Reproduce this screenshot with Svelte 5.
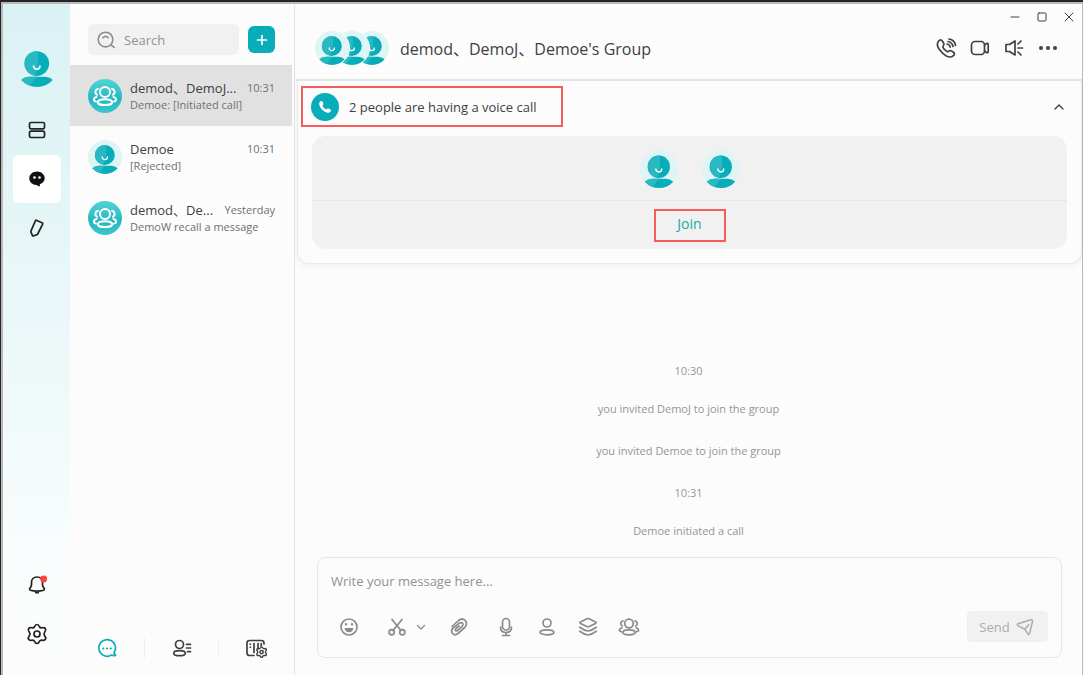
<script lang="ts">
	type Chat = { name: string; time: string; preview: string; group: boolean };

	const chats: Chat[] = [
		{ name: 'demod、DemoJ...', time: '10:31', preview: 'Demoe: [Initiated call]', group: true },
		{ name: 'Demoe', time: '10:31', preview: '[Rejected]', group: false },
		{ name: 'demod、De...', time: 'Yesterday', preview: 'DemoW recall a message', group: true }
	];
	const feed = [
		{ time: '10:30', lines: ['you invited DemoJ to join the group', 'you invited Demoe to join the group'] },
		{ time: '10:31', lines: ['Demoe initiated a call'] }
	];

	let selected = $state(0);
	let open = $state(true);
	let search = $state('');
	let message = $state('');
</script>

{#snippet person()}
	<svg class="person" viewBox="0 0 34 34" aria-hidden="true">
		<circle cx="17" cy="17" r="17" fill="#dff4f5" />
		<circle cx="16.800" cy="15" r="10" fill="#07adb8" />
		<path d="M16.800 5A10 10 0 0 0 15 24.800Q19.500 16 17.500 5Z" fill="#2ab9c3" />
		<path d="M4.300 28.300Q7 25.800 11 25.800H23Q27 25.800 29.700 28.300Q24.500 34 17 34T4.300 28.300Z" fill="#07adb8" />
		<path d="M4.300 28.300Q7 25.800 11 25.800H17L11.500 33Q7.500 31.500 4.300 28.300Z" fill="#2ab9c3" />
		<path d="M14.200 17a2.600 2.600 0 0 0 5.200 0" fill="none" stroke="#fff" stroke-width="1.300" />
	</svg>
{/snippet}

{#snippet people()}
	<circle cx="12" cy="8.500" r="4.300" />
	<ellipse cx="12" cy="17.300" rx="6.200" ry="2.500" />
	<path d="M6 5.800a2.800 2.800 0 0 0-.8 5.200M4.800 12.800c-2.700.5-3.300 3.300-.5 4M18 5.800a2.800 2.800 0 0 1 .8 5.200M19.200 12.800c2.700.5 3.300 3.300.5 4" />
{/snippet}

{#snippet gear()}
	<path d="M9.700 4.500Q10.300 2.500 12 2.500T14.300 4.500Q15.300 6.300 17.300 5.800Q19.500 5.200 20.400 6.700T19.800 9.800Q18.300 12 19.800 14.200Q21.300 15.800 20.400 17.300T17.300 18.200Q15.300 17.700 14.300 19.500Q13.700 21.500 12 21.500T9.700 19.500Q8.700 17.700 6.700 18.200Q4.500 18.800 3.600 17.300T4.200 14.200Q5.700 12 4.200 9.800Q2.700 8.200 3.600 6.700T6.700 5.800Q8.700 6.300 9.700 4.500Z" />
	<circle cx="12" cy="12" r="3" />
{/snippet}

<div class="window">
	<nav class="rail">
		<button class="me" aria-label="Profile">{@render person()}</button>
		<button aria-label="Workspace">
			<svg viewBox="0 0 24 24"><rect x="4.500" y="4.500" width="15" height="6.300" rx="1.500" /><rect x="4.500" y="13.200" width="15" height="6.300" rx="1.500" /></svg>
		</button>
		<button class="current" aria-label="Messages">
			<svg viewBox="0 0 24 24">
				<path d="M12 4.500c-4.300 0-7.700 2.900-7.700 6.700s3 6.700 7.200 6.700q1.700 1.300 3.300 1.600v-2.200c2.800-1 4.900-3.400 4.900-6.100 0-3.800-3.400-6.700-7.700-6.700Z" fill="#111" stroke="none" />
				<circle cx="9.500" cy="10.500" r="1.300" fill="#fff" stroke="none" /><circle cx="14.500" cy="10.500" r="1.300" fill="#fff" stroke="none" />
			</svg>
		</button>
		<button aria-label="Notes">
			<svg viewBox="0 0 24 24"><path d="M11.300 4.300 17.500 7q.5.300.3.800L12.700 18q-.3.500-.9.700l-3.500 1.200q-.6.100-.9-.4l-1.500-3.600q-.1-.5.100-1l4.500-10.300q.3-.5.800-.3Z" /></svg>
		</button>
		<span class="grow"></span>
		<button aria-label="Notifications">
			<svg viewBox="0 0 24 24">
				<path d="M12 4c-3.500 0-5.500 2.300-5.500 5.500v2.300q0 1.200-.8 2.200L5 15q-1 1.500.5 2.200 2.500.8 6.500.8t6.500-.8q1.500-.7.5-2.200l-.7-1q-.8-1-.8-2.200V9.500C17.500 6.300 15.500 4 12 4ZM10.300 18.500q.2 1.500 1.700 1.500t1.700-1.500" />
				<circle cx="18.700" cy="6" r="3.400" fill="#ff453a" stroke="none" />
			</svg>
		</button>
		<button aria-label="Settings"><svg viewBox="0 0 24 24">{@render gear()}</svg></button>
	</nav>

	<aside class="sidebar">
		<div class="find">
			<label class="search">
				<svg viewBox="0 0 24 24" aria-hidden="true"><circle cx="11.500" cy="11.500" r="8" /><path d="m17.500 17.500 3.500 2.500M8.500 9.500q3-3 6 0" /></svg>
				<input type="text" bind:value={search} placeholder="Search" aria-label="Search" />
			</label>
			<button class="add" aria-label="New chat"><svg viewBox="0 0 24 24"><path d="M12 7.500v9M7.500 12h9" /></svg></button>
		</div>
		<ul class="chats">
			{#each chats as chat, i}
				<li>
					<button class="chat" class:selected={selected === i} onclick={() => (selected = i)}>
						{#if chat.group}
							<span class="group"><svg viewBox="0 0 24 24">{@render people()}</svg></span>
						{:else}
							{@render person()}
						{/if}
						<span class="summary">
							<span class="top"><span class="name">{chat.name}</span><time>{chat.time}</time></span>
							<span class="preview">{chat.preview}</span>
						</span>
					</button>
				</li>
			{/each}
		</ul>
		<div class="tabs">
			<button class="active" aria-label="Chats">
				<svg viewBox="0 0 24 24"><path d="M19 16.700a8.300 8.300 0 1 0-2.400 2.300q1.800 1 4 .5-.7-1.300-1.600-2.800Z" /><path d="M8.300 12.500h.01M12 12.500h.01M15.700 12.500h.01" stroke-width="2.200" /></svg>
			</button>
			<button aria-label="Contacts">
				<svg viewBox="0 0 24 24"><circle cx="9.500" cy="8.500" r="4" /><ellipse cx="9.500" cy="17.200" rx="5.800" ry="2.500" /><path d="M16.500 8.300h4M16.500 12h4M17.500 15.700h3" /></svg>
			</button>
			<button aria-label="Organization">
				<svg viewBox="0 0 24 24">
					<path d="M10 19.500H5.500q-2.500 0-2.500-2.500V7q0-2.500 2.500-2.500h12Q20 4.500 20 7v1M10 7.500v9M14 7.500v5M17.200 7.500v2.300M6.300 8v.2M6.300 11v.2" />
					<g transform="translate(11 9.500) scale(.55)" stroke-width="2.600">{@render gear()}</g>
				</svg>
			</button>
		</div>
	</aside>

	<main>
		<header>
			<div class="controls">
				<button aria-label="Minimize"><svg viewBox="0 0 12 12"><path d="M2 6h8" /></svg></button>
				<button aria-label="Maximize"><svg viewBox="0 0 12 12"><rect x="2" y="2" width="8" height="8" rx="1" /></svg></button>
				<button aria-label="Close"><svg viewBox="0 0 12 12"><path d="m2 2 8 8M10 2l-8 8" /></svg></button>
			</div>
			<div class="title">
				<div class="members">
					{#each Array(3) as _}<span>{@render person()}</span>{/each}
				</div>
				<h1>demod、DemoJ、Demoe's Group</h1>
				<div class="actions">
					<button aria-label="Voice call">
						<svg viewBox="0 0 24 24"><path d="M4.500 5.200Q6.800 2.700 8.500 5.200l1.200 2q.7 1.300-.4 2.600-1 1.200.2 2.500l2.700 2.700q1.200 1 2.400.2 1.500-1.100 2.800-.3l2 1.400q2 1.500 0 3.300-2.800 2.600-7 .4-4-2.300-7-6.500-3.600-5.200-.9-8.300ZM13 8q2.800.5 3.200 3.200M14 5.500q4.300.8 5 5M15 3q5.800 1 6.500 6.500" /></svg>
					</button>
					<button aria-label="Video call">
						<svg viewBox="0 0 24 24"><rect x="3.500" y="5.500" width="13" height="13" rx="3.500" /><path d="m16.500 9 2-1.500q1.700-.8 1.700.9v7.200q0 1.700-1.700.9l-2-1.500" /></svg>
					</button>
					<button aria-label="Announcements">
						<svg viewBox="0 0 24 24"><path d="M4 8.500h3.500L13 5v14l-5.500-3.500H4ZM16 12h4.500M16 8l3-3M16 16l3 3" /></svg>
					</button>
					<button aria-label="More"><svg viewBox="0 0 24 24"><path d="M5 12h.01M12 12h.01M19 12h.01" stroke-width="4" /></svg></button>
				</div>
			</div>
		</header>

		<section class="call">
			<div class="call-head">
				<div class="status">
					<span class="phone"><svg viewBox="0 0 24 24"><path d="M6 5.500Q7.500 4 9 5.500q1.300 2 1 3.500l-1.200 1.500Q10.500 13.500 13.500 15l1.500-1.200q1.500-.3 3.500 1 1.500 1.500 0 3-1.500 1.800-4 1Q7.500 16.500 5.200 9.500q-.7-2.500.8-4Z" /></svg></span>
					2 people are having a voice call
				</div>
				<button class="toggle" aria-label="Toggle call details" onclick={() => (open = !open)}>
					<svg viewBox="0 0 12 12"><path d="m3 7.500 3-3 3 3" /></svg>
				</button>
			</div>
			{#if open}
				<div class="card">
					<div class="callers">{@render person()}{@render person()}</div>
					<div class="join-row"><button class="join">Join</button></div>
				</div>
			{/if}
		</section>

		<div class="feed">
			{#each feed as block}
				<time>{block.time}</time>
				{#each block.lines as line}<p>{line}</p>{/each}
			{/each}
		</div>

		<form class="composer" onsubmit={(e) => e.preventDefault()}>
			<textarea rows="1" bind:value={message} placeholder="Write your message here..." aria-label="Message"></textarea>
			<div class="tools">
				<button type="button" aria-label="Emoji">
					<svg viewBox="0 0 24 24"><circle cx="12" cy="12" r="8" /><path d="M7.500 13h9q-.7 4.200-4.500 4.200T7.500 13Z" fill="currentColor" stroke="none" /><path d="M9 9.300h.01M15 9.300h.01" stroke-width="2.500" /></svg>
				</button>
				<button type="button" class="cut" aria-label="Screenshot">
					<svg viewBox="0 0 24 24"><path d="M7 4.500 16 15.500M17 4.500 8 15.500" /><circle cx="6.700" cy="17.200" r="2.600" /><circle cx="17.300" cy="17.200" r="2.600" /></svg>
				</button>
				<button type="button" class="more" aria-label="Screenshot options"><svg viewBox="0 0 12 12"><path d="m2.500 4.500 3.500 3.500 3.500-3.500" /></svg></button>
				<button type="button" class="clip" aria-label="Attach file">
					<svg viewBox="0 0 24 24"><path d="M5 11.500 11.500 5.500Q15.500 2.500 18.300 5.500 21 9 17.700 12.500L11 18.500Q8 21 5.500 18.500 3.500 15.800 6 13.200L12 8.300Q14.500 6.700 15.800 8.500 16.700 10 15 11.700L10.500 15.500Q9 16.500 8.300 15.300 8 14.500 9 13.500L12 11" /></svg>
				</button>
				<button type="button" aria-label="Voice message">
					<svg viewBox="0 0 24 24"><rect x="8.500" y="3.500" width="7" height="11.500" rx="3.500" /><path d="M6.500 12q0 5.500 5.500 5.500t5.500-5.500M12 18v2.500M8.500 20.500h7" /></svg>
				</button>
				<button type="button" aria-label="Contact card">
					<svg viewBox="0 0 24 24"><circle cx="12" cy="8" r="4" /><ellipse cx="12" cy="17.300" rx="7" ry="2.500" /></svg>
				</button>
				<button type="button" aria-label="Layers">
					<svg viewBox="0 0 24 24"><path d="M10.800 3.800q1.200-.6 2.400 0L19.500 7q1.300.8 0 1.600l-6.300 3q-1.200.6-2.400 0l-6.300-3q-1.300-.8 0-1.600ZM3.700 12.300Q8 15.500 12 16q4-.5 8.300-3.700M3.700 16.300Q8 19.500 12 20q4-.5 8.300-3.700" /></svg>
				</button>
				<button type="button" aria-label="Group"><svg viewBox="0 0 24 24">{@render people()}</svg></button>
				<span class="grow"></span>
				<button class="send">
					Send
					<svg viewBox="0 0 24 24"><path d="M4.500 8.500 18.500 4.200q2-.4 1.700 1.500L17 19q-.6 1.800-1.800.5l-3.400-5-7.300-3.700q-1.700-1.300 0-2.300ZM11.800 14.500 16 9.500" /></svg>
				</button>
			</div>
		</form>
	</main>
</div>

<style>
	:global(body) {
		background: #fcfcfc;
	}
	:global(#app) {
		box-sizing: border-box;
		height: 100vh;
		min-height: 560px;
		border-top: 2px solid #252525;
		border-left: 1px solid #252525;
	}
	.window {
		display: flex;
		box-sizing: border-box;
		height: 100%;
		border: solid #b9b9b9;
		border-width: 2px 1px 0 2px;
		background: #fcfcfc;
		color: #404040;
		font-family: 'Open Sans', 'Noto Sans CJK SC', sans-serif;
		font-size: 13px;
	}
	button,
	input,
	textarea {
		margin: 0;
		padding: 0;
		border: 0;
		background: none;
		color: inherit;
		font: inherit;
	}
	button {
		display: flex;
		align-items: center;
		justify-content: center;
		cursor: pointer;
	}
	svg {
		display: block;
		flex: none;
		width: 24px;
		height: 24px;
		fill: none;
		stroke: currentColor;
		stroke-width: 1.7;
		stroke-linecap: round;
		stroke-linejoin: round;
	}
	.person {
		width: 34px;
		height: 34px;
		stroke: none;
	}
	.grow {
		flex: 1;
	}

	.rail {
		display: flex;
		flex: none;
		flex-direction: column;
		align-items: center;
		gap: 1px;
		box-sizing: border-box;
		width: 67px;
		padding: 43px 0 17px;
		background: linear-gradient(#daf2f4, #e6f6f7 35%, #fafdfd 85%, #fcfcfc);
		color: #222;
	}
	.rail button {
		width: 48px;
		height: 48px;
		border-radius: 6px;
	}
	.rail .me {
		height: 38px;
		margin-bottom: 20px;
	}
	.me .person {
		width: 42px;
		height: 42px;
	}
	.me .person circle:first-child {
		fill: none;
	}
	.rail .current {
		background: #fff;
	}

	.sidebar {
		display: flex;
		flex: none;
		flex-direction: column;
		box-sizing: border-box;
		width: 225px;
		padding-right: 2px;
		border-right: 1px solid #e3e3e3;
	}
	.find {
		display: flex;
		align-items: center;
		gap: 9px;
		padding: 20px 17px 10px 18px;
	}
	.search {
		display: flex;
		flex: 1;
		align-items: center;
		gap: 6px;
		min-width: 0;
		height: 31px;
		padding-left: 6px;
		border-radius: 6px;
		background: #f1f1f1;
		color: #8c8c8c;
	}
	.search svg {
		width: 24px;
		height: 22px;
	}
	.search input {
		width: 100%;
		min-width: 0;
		outline: none;
	}
	::placeholder {
		color: #929292;
		opacity: 1;
	}
	.add {
		width: 27px;
		height: 27px;
		border-radius: 6px;
		background: #07adb8;
		color: #fff;
	}
	.chats {
		flex: 1;
		margin: 0;
		padding: 0;
		list-style: none;
	}
	.chat {
		gap: 8px;
		width: 100%;
		height: 61px;
		padding: 0 17px 0 18px;
		text-align: left;
	}
	.chat.selected {
		background: #e1e1e1;
	}
	.group {
		display: flex;
		flex: none;
		align-items: center;
		justify-content: center;
		width: 34px;
		height: 34px;
		border-radius: 50%;
		background: linear-gradient(#50d5d7, #25b7c0 60%, #3cc8cd);
		color: #fff;
	}
	.group svg {
		width: 28px;
		height: 28px;
	}
	.summary {
		display: flex;
		flex: 1;
		flex-direction: column;
		min-width: 0;
	}
	.top {
		display: flex;
		align-items: center;
		justify-content: space-between;
		height: 18px;
		white-space: nowrap;
	}
	.chat time,
	.preview {
		color: #707070;
		font-size: 11px;
		line-height: 16px;
	}
	.tabs {
		display: grid;
		grid-template-columns: repeat(3, 1fr);
		padding: 17px 0;
	}
	.tabs button {
		height: 20px;
	}
	.tabs button + button {
		border-left: 1px solid #eee;
	}
	.tabs .active {
		color: #07adb8;
	}

	main {
		display: flex;
		flex: 1;
		flex-direction: column;
		min-width: 0;
	}
	header {
		border-bottom: 2px solid #e6e6e6;
	}
	.controls {
		display: flex;
		justify-content: flex-end;
		height: 26px;
	}
	.controls button {
		width: 27px;
	}
	.controls svg {
		width: 12px;
		height: 12px;
		stroke-width: 1;
	}
	.title {
		display: flex;
		align-items: center;
		height: 36px;
		padding: 0 17px 13px 19px;
	}
	.members {
		display: flex;
		margin-right: 10px;
	}
	.members span {
		position: relative;
		z-index: 3;
		border: 1px solid #fcfcfc;
		border-radius: 50%;
		background: #fcfcfc;
	}
	.members span + span {
		z-index: 2;
		margin-left: -16px;
	}
	.members span + span + span {
		z-index: 1;
	}
	h1 {
		flex: 1;
		margin: 0;
		font-size: 16px;
		font-weight: 400;
	}
	.actions {
		display: flex;
	}
	.actions button {
		width: 34px;
		height: 34px;
	}

	.call {
		margin: 0 0 0 2px;
		padding: 5px 14px 14px;
		border: 1px solid #e9e9e9;
		border-top: 0;
		border-radius: 0 0 12px 12px;
		box-shadow: 0 2px 6px #0000000d;
	}
	.call-head {
		display: flex;
		align-items: center;
		justify-content: space-between;
		margin: 0 0 9px -11px;
	}
	.status {
		display: flex;
		align-items: center;
		gap: 10px;
		height: 37px;
		padding: 0 24px 0 8px;
		border: 2px solid #f95a5a;
	}
	.phone {
		display: flex;
		align-items: center;
		justify-content: center;
		width: 28px;
		height: 28px;
		border-radius: 50%;
		background: #07adb8;
	}
	.phone svg {
		width: 20px;
		height: 20px;
		fill: #fff;
		stroke: none;
	}
	.toggle svg {
		width: 16px;
		height: 16px;
		stroke-width: 1;
	}
	.card {
		border-radius: 14px;
		background: #f1f1f1;
	}
	.callers {
		display: flex;
		justify-content: center;
		gap: 24px;
		padding: 14px 0 12px;
		border-bottom: 1px solid #e6e6e6;
	}
	.callers .person {
		width: 38px;
		height: 38px;
	}
	.join-row {
		display: flex;
		justify-content: center;
		padding: 8px 0 7px;
	}
	.join {
		box-sizing: border-box;
		width: 72px;
		height: 33px;
		padding-bottom: 4px;
		border: 2px solid #f95a5a;
		color: #16a8b0;
		font-size: 14px;
	}

	.feed {
		display: flex;
		flex: 1;
		flex-direction: column;
		align-items: center;
		justify-content: flex-end;
		min-height: 0;
		padding-bottom: 18px;
		color: #959595;
		font-size: 11px;
		line-height: 16px;
	}
	.feed time {
		margin-bottom: 22px;
	}
	.feed p {
		margin: 0 0 26px;
	}
	.feed p:last-child {
		margin: 0;
	}

	.composer {
		margin: 0 20px 17px 22px;
		padding: 12px 13px 15px;
		border: 1px solid #e6e6e6;
		border-radius: 8px;
	}
	textarea {
		display: block;
		box-sizing: border-box;
		width: 100%;
		height: 22px;
		line-height: 22px;
		outline: none;
		overflow: hidden;
		resize: none;
	}
	.tools {
		display: flex;
		align-items: center;
		gap: 17px;
		margin-top: 19px;
		padding-left: 6px;
		color: #8b8b8b;
	}
	.cut {
		margin-left: 7px;
	}
	.more {
		margin: 0 3px 0 -11px;
	}
	.more svg {
		width: 12px;
		height: 12px;
		stroke-width: 1.2;
	}
	.clip {
		margin-right: 6px;
	}
	.send {
		gap: 4px;
		width: 81px;
		height: 31px;
		border-radius: 4px;
		background: #f1f1f1;
		color: #acacac;
	}
	.send svg {
		width: 22px;
		height: 22px;
	}
</style>
